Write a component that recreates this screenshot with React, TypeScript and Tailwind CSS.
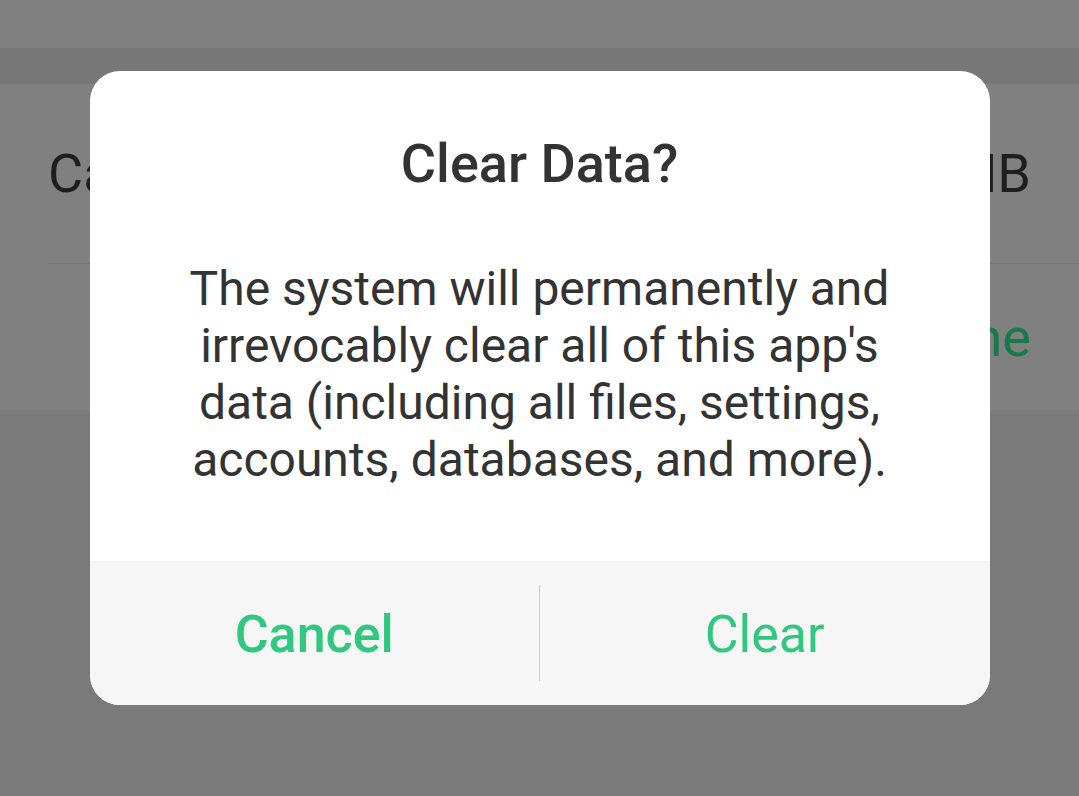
import React from "react";

export default function App() {
  const font = { fontFamily: "Roboto, 'Noto Sans', sans-serif" };
  return (
    <div className="relative h-[796px] w-full overflow-hidden bg-[#7a7a7a]" style={font}>
      {/* underlying page (dimmed) */}
      <div className="flex flex-col">
        <div className="h-[48px] bg-[#808080]" />
        <div className="h-[36px] bg-[#777777]" />
        <div className="flex h-[326px] flex-col bg-[#808080]">
          <div className="ml-[48px] flex h-[180px] items-center justify-between border-b border-[#747474] pr-[48px] text-[54px] text-[#1e1e1e]">
            <span>Cache</span>
            <span>0 MB</span>
          </div>
          <div className="ml-[48px] flex flex-1 items-center justify-end pr-[48px] text-[54px] text-[#187a4b]">
            <span>Done</span>
          </div>
        </div>
      </div>

      {/* dialog */}
      <div className="absolute inset-0 flex justify-center pt-[71px]">
        <div className="flex h-[634px] w-[900px] flex-col overflow-hidden rounded-[30px] bg-white">
          <div className="flex flex-1 flex-col items-center pt-[62px]">
            <div className="text-[54px] font-medium leading-[62px] text-[#333333]">Clear Data?</div>
            <div className="mt-[65px] text-center text-[48px] leading-[57px] text-[#333333]">
              The system will permanently and
              <br />
              irrevocably clear all of this app's
              <br />
              data (including all files, settings,
              <br />
              accounts, databases, and more).
            </div>
          </div>
          <div className="flex h-[144px] items-center bg-[#f6f6f6]">
            <div className="flex flex-1 items-center justify-center pt-[4px] text-[52px] font-medium text-[#30c77e]">
              Cancel
            </div>
            <div className="h-[96px] w-px bg-[#cccccc]" />
            <div className="flex flex-1 items-center justify-center pt-[4px] text-[52px] text-[#30c77e]">
              Clear
            </div>
          </div>
        </div>
      </div>
    </div>
  );
}
